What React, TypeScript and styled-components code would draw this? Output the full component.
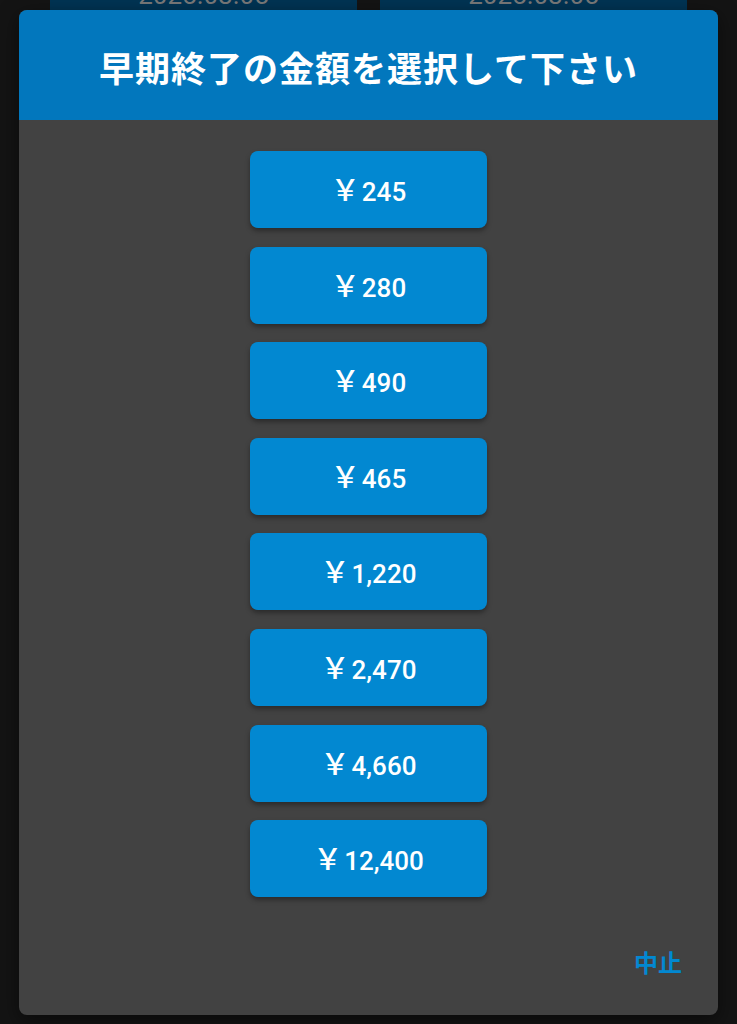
import React from "react";
import styled, { createGlobalStyle } from "styled-components";

const GlobalStyle = createGlobalStyle`
  html, body {
    margin: 0;
    padding: 0;
    background: #141414;
  }
  body {
    font-family: Roboto, "Noto Sans CJK JP", sans-serif;
  }
`;

const Screen = styled.div`
  position: relative;
  width: 737px;
  height: 1024px;
  overflow: hidden;
  background: #141414;
`;

const BackRow = styled.div`
  display: flex;
  gap: 23px;
  padding: 0 50px;
  margin-top: -30px;
`;

const BackCard = styled.div`
  flex: 1;
  height: 40px;
  background: #013454;
  color: #7a7a7a;
  font-size: 26px;
  display: flex;
  align-items: flex-end;
  justify-content: center;
  padding-bottom: 1px;
`;

const Dialog = styled.div`
  position: absolute;
  left: 19px;
  top: 10px;
  width: 699px;
  height: 1005px;
  border-radius: 8px;
  background: #424242;
  overflow: hidden;
  display: flex;
  flex-direction: column;
  box-shadow: 0 6px 20px rgba(0, 0, 0, 0.5);
`;

const Header = styled.div`
  height: 110px;
  background: #0277bd;
  color: #fff;
  display: flex;
  align-items: center;
  justify-content: center;
  font-family: "Noto Sans CJK JP", sans-serif;
  font-weight: 700;
  font-size: 35px;
  letter-spacing: 1px;
  padding-top: 2px;
  box-sizing: border-box;
`;

const List = styled.div`
  display: flex;
  flex-direction: column;
  align-items: center;
  gap: 18.6px;
  padding-top: 31px;
`;

const Amount = styled.button`
  width: 237px;
  height: 77px;
  border: none;
  border-radius: 8px;
  background: #0288d1;
  color: #fff;
  font-family: Roboto, "Noto Sans CJK JP", sans-serif;
  font-weight: 500;
  font-size: 26px;
  box-shadow: 0 3px 5px rgba(0, 0, 0, 0.35);
  display: flex;
  align-items: center;
  justify-content: center;
  padding: 0;
  cursor: pointer;
`;

const Label = styled.span`
  line-height: 1;
  white-space: nowrap;
`;

const Yen = styled.span`
  font-family: "Noto Sans CJK JP", sans-serif;
  font-weight: 500;
  font-size: 29px;
  margin-right: 2px;
`;

const Footer = styled.div`
  margin-top: auto;
  display: flex;
  justify-content: flex-end;
  padding: 0 36px 36px 0;
`;

const Cancel = styled.button`
  background: none;
  border: none;
  color: #0288d1;
  font-family: "Noto Sans CJK JP", sans-serif;
  font-weight: 700;
  font-size: 24px;
  padding: 0;
  cursor: pointer;
`;

const amounts = ["245", "280", "490", "465", "1,220", "2,470", "4,660", "12,400"];

export default function App() {
  return (
    <Screen>
      <GlobalStyle />
      <BackRow>
        <BackCard>2025.08.05</BackCard>
        <BackCard>2025.08.05</BackCard>
      </BackRow>
      <Dialog>
        <Header>早期終了の金額を選択して下さい</Header>
        <List>
          {amounts.map((a) => (
            <Amount key={a}>
              <Label>
                <Yen>￥</Yen>
                {a}
              </Label>
            </Amount>
          ))}
        </List>
        <Footer>
          <Cancel>中止</Cancel>
        </Footer>
      </Dialog>
    </Screen>
  );
}
